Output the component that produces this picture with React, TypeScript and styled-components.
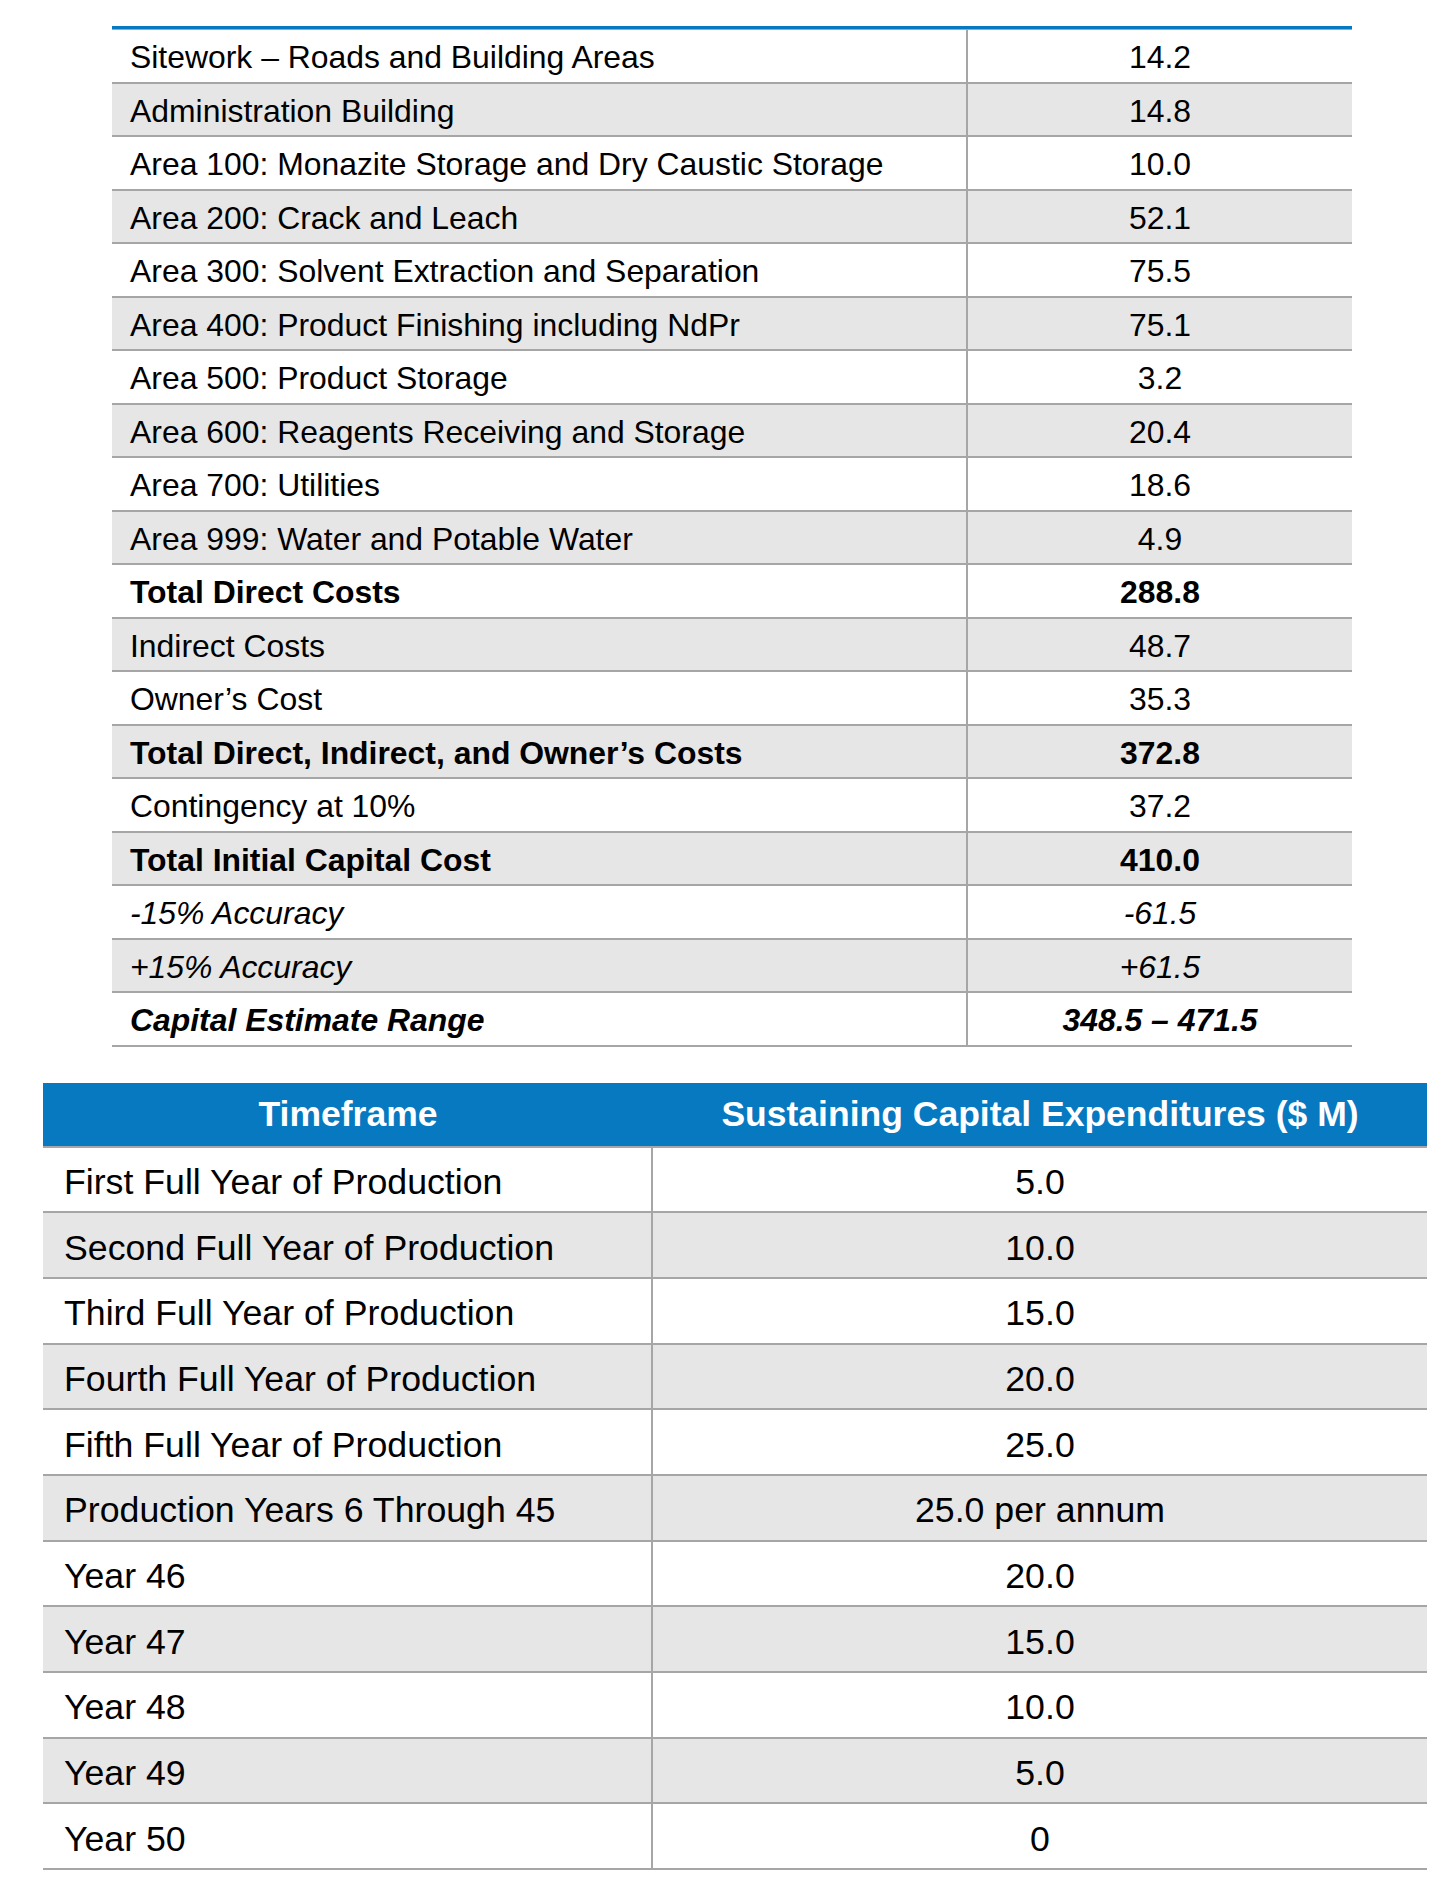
import React from "react";
import styled, { createGlobalStyle, css } from "styled-components";

type CostRow = {
	label: string;
	value: string;
	bold?: boolean;
	italic?: boolean;
};

const capitalRows: CostRow[] = [
	{ label: "Sitework – Roads and Building Areas", value: "14.2" },
	{ label: "Administration Building", value: "14.8" },
	{ label: "Area 100: Monazite Storage and Dry Caustic Storage", value: "10.0" },
	{ label: "Area 200: Crack and Leach", value: "52.1" },
	{ label: "Area 300: Solvent Extraction and Separation", value: "75.5" },
	{ label: "Area 400: Product Finishing including NdPr", value: "75.1" },
	{ label: "Area 500: Product Storage", value: "3.2" },
	{ label: "Area 600: Reagents Receiving and Storage", value: "20.4" },
	{ label: "Area 700: Utilities", value: "18.6" },
	{ label: "Area 999: Water and Potable Water", value: "4.9" },
	{ label: "Total Direct Costs", value: "288.8", bold: true },
	{ label: "Indirect Costs", value: "48.7" },
	{ label: "Owner’s Cost", value: "35.3" },
	{ label: "Total Direct, Indirect, and Owner’s Costs", value: "372.8", bold: true },
	{ label: "Contingency at 10%", value: "37.2" },
	{ label: "Total Initial Capital Cost", value: "410.0", bold: true },
	{ label: "-15% Accuracy", value: "-61.5", italic: true },
	{ label: "+15% Accuracy", value: "+61.5", italic: true },
	{ label: "Capital Estimate Range", value: "348.5 – 471.5", bold: true, italic: true },
];

const sustainingRows: CostRow[] = [
	{ label: "First Full Year of Production", value: "5.0" },
	{ label: "Second Full Year of Production", value: "10.0" },
	{ label: "Third Full Year of Production", value: "15.0" },
	{ label: "Fourth Full Year of Production", value: "20.0" },
	{ label: "Fifth Full Year of Production", value: "25.0" },
	{ label: "Production Years 6 Through 45", value: "25.0 per annum" },
	{ label: "Year 46", value: "20.0" },
	{ label: "Year 47", value: "15.0" },
	{ label: "Year 48", value: "10.0" },
	{ label: "Year 49", value: "5.0" },
	{ label: "Year 50", value: "0" },
];

const App = () => {
	return (
		<>
			<GlobalStyle />
			<Page>
				<CapitalTable>
					{capitalRows.map((row, i) => (
						<CapitalRow key={row.label} $shaded={i % 2 === 1}>
							<LabelCell $bold={row.bold} $italic={row.italic}>
								{row.label}
							</LabelCell>
							<ValueCell $bold={row.bold} $italic={row.italic}>
								{row.value}
							</ValueCell>
						</CapitalRow>
					))}
				</CapitalTable>

				<SustainingTable>
					<HeaderRow>
						<HeaderCell>Timeframe</HeaderCell>
						<HeaderCell>Sustaining Capital Expenditures ($ M)</HeaderCell>
					</HeaderRow>
					{sustainingRows.map((row, i) => (
						<SustainingRow key={row.label} $shaded={i % 2 === 1}>
							<LabelCell>{row.label}</LabelCell>
							<ValueCell>{row.value}</ValueCell>
						</SustainingRow>
					))}
				</SustainingTable>
			</Page>
		</>
	);
};

export default App;

const BLUE = "#0679c1";
const RULE = "#a6a6a6";
const SHADE = "#e6e6e6";

const GlobalStyle = createGlobalStyle`
	html, body {
		margin: 0;
		padding: 0;
		background: #ffffff;
	}

	body {
		font-family: "Liberation Sans", Arial, sans-serif;
		color: #000000;
	}

	*, *::before, *::after {
		box-sizing: border-box;
	}
`;

const Page = styled.div`
	width: 1456px;
	min-height: 1883px;
	padding-top: 26px;
	display: flex;
	flex-direction: column;
`;

const CapitalTable = styled.div`
	margin-left: 112px;
	width: 1240px;
	border-top: 3px solid ${BLUE};
	font-size: 31.9px;

	& > div:first-child {
		border-top: 1px solid ${RULE};
		height: 54.5px;
	}
`;

const SustainingTable = styled.div`
	margin-top: 36px;
	margin-left: 43px;
	width: 1384px;
	font-size: 35.7px;
`;

const rowBase = css<{ $shaded: boolean }>`
	display: grid;
	align-items: center;
	border-bottom: 2px solid ${RULE};
	background: ${(p) => (p.$shaded ? SHADE : "#ffffff")};
`;

const CapitalRow = styled.div<{ $shaded: boolean }>`
	${rowBase};
	grid-template-columns: 856px 1fr;
	height: 53.5px;

	& > div {
		padding-top: 4px;
	}

	& > div:first-child {
		padding-left: 18px;
	}
`;

const SustainingRow = styled.div<{ $shaded: boolean }>`
	${rowBase};
	grid-template-columns: 610px 1fr;
	height: 65.7px;

	& > div {
		padding-top: 6px;
	}

	& > div:first-child {
		padding-left: 21px;
	}
`;

const LabelCell = styled.div<{ $bold?: boolean; $italic?: boolean }>`
	height: 100%;
	display: flex;
	align-items: center;
	border-right: 2px solid ${RULE};
	white-space: nowrap;
	font-weight: ${(p) => (p.$bold ? 700 : 400)};
	font-style: ${(p) => (p.$italic ? "italic" : "normal")};
`;

const ValueCell = styled.div<{ $bold?: boolean; $italic?: boolean }>`
	height: 100%;
	display: flex;
	align-items: center;
	justify-content: center;
	white-space: nowrap;
	font-weight: ${(p) => (p.$bold ? 700 : 400)};
	font-style: ${(p) => (p.$italic ? "italic" : "normal")};
`;

const HeaderRow = styled.div`
	display: grid;
	grid-template-columns: 610px 1fr;
	height: 65px;
	background: ${BLUE};
	border-bottom: 2px solid ${RULE};
`;

const HeaderCell = styled.div`
	display: flex;
	align-items: center;
	justify-content: center;
	color: #ffffff;
	font-weight: 700;
	font-size: 35.5px;
	white-space: nowrap;
	padding-top: 1px;
`;
